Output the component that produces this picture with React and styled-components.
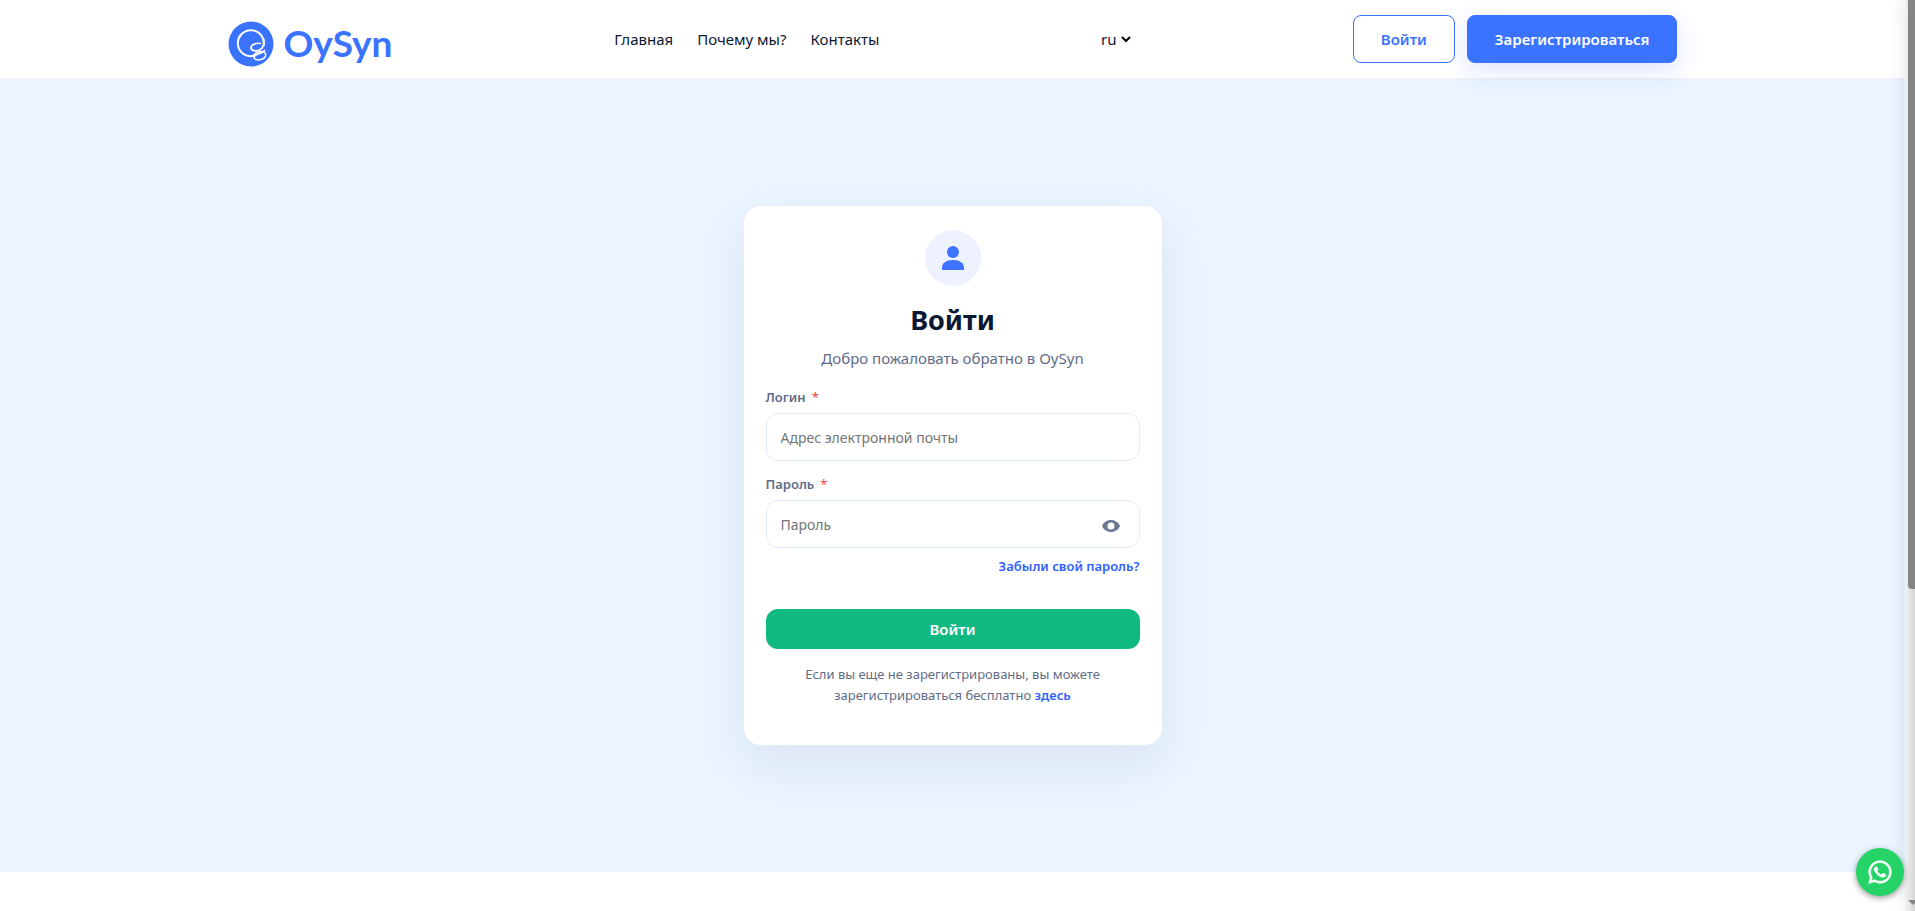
import React, { useState } from "react";
import styled, { createGlobalStyle } from "styled-components";
import { FaWhatsapp } from "react-icons/fa";

const GlobalStyle = createGlobalStyle`
  * {
    box-sizing: border-box;
  }

  body {
    margin: 0;
    background: #fff;
    font-family: "Noto Sans", "Open Sans", sans-serif;
    font-size: 15px;
    color: #0b1733;
  }

  a {
    text-decoration: none;
  }

  button, input, select {
    font-family: inherit;
  }
`;

const Page = styled.div`
  display: grid;
  grid-template-columns: minmax(0, 1fr) 10px;
  height: 100vh;
  overflow: hidden;
`;

const Content = styled.div`
  overflow: hidden;
`;

const Header = styled.header`
  border-bottom: 1px solid #eef0f6;
`;

const HeaderInner = styled.div`
  display: flex;
  justify-content: space-between;
  align-items: center;
  max-width: 1490px;
  min-height: 78px;
  margin: 0 auto;
  padding: 0 20px;
`;

const Logo = styled.a`
  display: flex;
  align-items: center;
  gap: 10px;
  padding-top: 10px;
  color: #3973ff;
  font-family: Lato, sans-serif;
  font-size: 37px;
  font-weight: 700;
  line-height: 45px;

  span {
    padding-bottom: 3px;
  }
`;

const Nav = styled.nav`
  display: flex;
  gap: 24px;
`;

const NavLink = styled.a`
  color: #0b1733;
  line-height: 24px;
`;

const Lang = styled.div`
  display: flex;
  align-items: center;
  gap: 4px;
`;

const LangSelect = styled.select`
  appearance: none;
  padding: 0;
  border: none;
  background: none;
  color: #0b1733;
  font-size: 15px;
  line-height: 24px;
`;

const Actions = styled.div`
  display: flex;
  gap: 12px;
`;

const ActionLink = styled.a`
  padding: 11px 27px;
  border: 1px solid #3973ff;
  border-radius: 8px;
  background: ${props => (props.$filled ? "#3973ff" : "#fff")};
  box-shadow: ${props => (props.$filled ? "0 8px 24px rgba(57, 87, 255, 0.16)" : "none")};
  color: ${props => (props.$filled ? "#fff" : "#3973ff")};
  font-weight: 600;
  line-height: 24px;
`;

const Main = styled.main`
  display: flex;
  justify-content: center;
  padding: 126px 20px;
  background: #eaf5ff;
`;

const Card = styled.form`
  display: flex;
  flex-direction: column;
  width: 100%;
  max-width: 420px;
  padding: 24px 22px 39px;
  border: 1px solid #e6ecff;
  border-radius: 18px;
  background: #fff;
  box-shadow: 0 18px 50px rgba(20, 40, 80, 0.08);
`;

const Avatar = styled.div`
  display: flex;
  align-items: center;
  justify-content: center;
  align-self: center;
  width: 56px;
  height: 56px;
  border-radius: 50%;
  background: #eef2ff;
`;

const Title = styled.h1`
  margin: 16px 0 8px;
  font-size: 27px;
  font-weight: 700;
  line-height: 36px;
  text-align: center;
`;

const Subtitle = styled.p`
  margin: 0 0 16px;
  color: #5f6c88;
  font-size: 15px;
  line-height: 24px;
  text-align: center;
`;

const Field = styled.div`
  display: flex;
  flex-direction: column;
  margin-bottom: 12px;
`;

const Label = styled.label`
  margin-bottom: 4px;
  color: #5f6c88;
  font-size: 13px;
  font-weight: 600;
  line-height: 23px;
`;

const Star = styled.span`
  margin-left: 6px;
  color: #ef4444;
  font-weight: 400;
`;

const InputBox = styled.div`
  display: flex;
  align-items: center;
  height: 48px;
  padding: 0 14px;
  border: 1px solid #e3e9fc;
  border-radius: 12px;
  background: #fff;
`;

const Input = styled.input`
  flex: 1;
  min-width: 0;
  padding: 0;
  border: none;
  outline: none;
  background: none;
  font-size: 14px;

  &::placeholder {
    color: #757575;
  }
`;

const EyeButton = styled.button`
  display: flex;
  padding: 8px 5px 5px;
  border: none;
  background: none;
  cursor: pointer;
`;

const Forgot = styled.a`
  align-self: flex-end;
  margin-top: -4px;
  color: #2f62ff;
  font-size: 13px;
  font-weight: 600;
  line-height: 21px;
`;

const Submit = styled.button`
  height: 40px;
  margin: 32px 0 15px;
  border: none;
  border-radius: 12px;
  background: #10b981;
  color: #fff;
  font-size: 15px;
  font-weight: 600;
  cursor: pointer;
`;

const Hint = styled.p`
  margin: 0;
  color: #5f6c88;
  font-size: 13px;
  line-height: 21px;
  text-align: center;

  a {
    color: #2f62ff;
    font-weight: 600;
  }
`;

const Chat = styled.a`
  position: fixed;
  right: 11px;
  bottom: 15px;
  display: flex;
  align-items: center;
  justify-content: center;
  width: 48px;
  height: 48px;
  border-radius: 50%;
  background: #25d366;
  box-shadow: 0 2px 6px rgba(0, 0, 0, 0.4);
  color: #fff;
`;

const Track = styled.div`
  display: flex;
  flex-direction: column;
  justify-content: space-between;
  padding: 0 0 5px 3px;
  background: linear-gradient(90deg, #f2f2f2, #d6d6d6);
  box-shadow: 0 0 16px rgba(30, 50, 90, 0.14);
`;

const Thumb = styled.div`
  height: 65%;
  border-bottom-left-radius: 4px;
  background: #858585;
`;

const App = () => {
  const [visible, setVisible] = useState(false);

  return (
    <>
      <GlobalStyle />
      <Page>
        <Content>
          <Header>
            <HeaderInner>
              <Logo href="/">
                <svg width="46" height="46" viewBox="0 0 46 46" fill="none" stroke="#fff" strokeWidth="2">
                  <circle cx="23" cy="23" r="22.5" fill="#3973ff" stroke="none" />
                  <path d="M35.500 25A13 13 0 1 0 27 34.500" />
                  <path d="M35.500 18c1 5-.5 9-4 11-3 1.500-8 1-8.500-2-.3-3 5-5.500 10-4.500" strokeWidth="1.700" />
                  <path d="M25.500 36c-.5-3 4-5.500 8-5.500s5 3 3.500 5.500-6 3.500-9 2.500-2.500-3 0-4.500 7-2 9-5" strokeWidth="1.500" />
                </svg>
                <span>OySyn</span>
              </Logo>
              <Nav>
                <NavLink href="#main">Главная</NavLink>
                <NavLink href="#why">Почему мы?</NavLink>
                <NavLink href="#contacts">Контакты</NavLink>
              </Nav>
              <Lang>
                <LangSelect aria-label="Язык" defaultValue="ru">
                  <option value="ru">ru</option>
                </LangSelect>
                <svg width="10" height="7" viewBox="0 0 10 7" fill="none" stroke="#000" strokeWidth="2">
                  <path d="M1 1l4 4 4-4" />
                </svg>
              </Lang>
              <Actions>
                <ActionLink href="#login">Войти</ActionLink>
                <ActionLink href="#register" $filled>Зарегистрироваться</ActionLink>
              </Actions>
            </HeaderInner>
          </Header>
          <Main>
            <Card onSubmit={e => e.preventDefault()}>
              <Avatar>
                <svg width="22" height="24" viewBox="0 0 22 24" fill="#3f74ff">
                  <circle cx="11" cy="6" r="6" />
                  <path d="M0 24v-2c0-5 4-8 11-8s11 3 11 8v2z" />
                </svg>
              </Avatar>
              <Title>Войти</Title>
              <Subtitle>Добро пожаловать обратно в OySyn</Subtitle>
              <Field>
                <Label htmlFor="login">Логин<Star>*</Star></Label>
                <InputBox>
                  <Input id="login" type="email" placeholder="Адрес электронной почты" />
                </InputBox>
              </Field>
              <Field>
                <Label htmlFor="password">Пароль<Star>*</Star></Label>
                <InputBox>
                  <Input id="password" type={visible ? "text" : "password"} placeholder="Пароль" />
                  <EyeButton type="button" aria-label="Показать пароль" onClick={() => setVisible(!visible)}>
                    <svg width="18" height="12" viewBox="0 0 18 12" fill="#6b7a94" fillRule="evenodd">
                      <path d="M9 0c4 0 7.500 2.500 9 6-1.500 3.500-5 6-9 6s-7.500-2.500-9-6c1.500-3.500 5-6 9-6zm0 2.500a3.500 3.500 0 1 0 0 7 3.500 3.500 0 0 0 0-7z" />
                    </svg>
                  </EyeButton>
                </InputBox>
              </Field>
              <Forgot href="#forgot">Забыли свой пароль?</Forgot>
              <Submit type="submit">Войти</Submit>
              <Hint>
                Если вы еще не зарегистрированы, вы можете
                <br />
                зарегистрироваться бесплатно <a href="#register">здесь</a>
              </Hint>
            </Card>
          </Main>
        </Content>
        <Track>
          <Thumb />
          <svg width="7" height="6" viewBox="0 0 7 6" fill="#858585">
            <path d="M0 0h10L5 5z" />
          </svg>
        </Track>
      </Page>
      <Chat href="#chat" aria-label="WhatsApp">
        <FaWhatsapp size={26} stroke="currentColor" strokeWidth={12} />
      </Chat>
    </>
  );
};

export default App;
